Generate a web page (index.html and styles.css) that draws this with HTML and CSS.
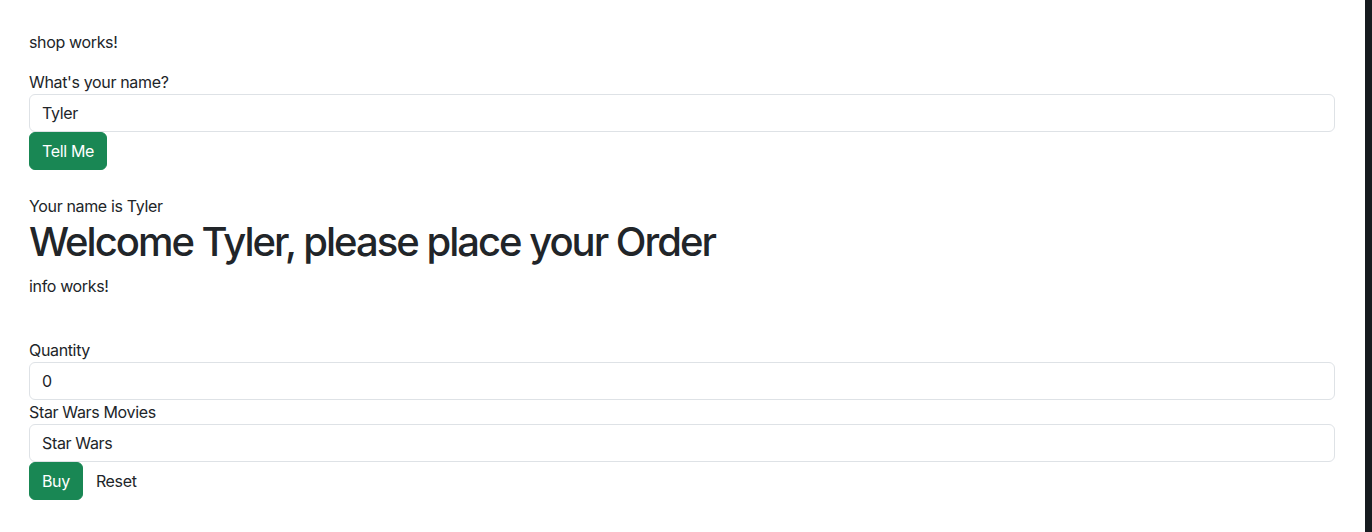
FILE: index.html
```html
<!DOCTYPE html>
<html lang="en">
<head>
<meta charset="utf-8">
<title>Shop</title>
<link rel="stylesheet" href="styles.css">
</head>
<body>
<div class="page">
  <main class="content">
    <p class="text">shop works!</p>
    <label class="label" for="name">What's your name?</label>
    <input class="field" id="name" type="text" value="Tyler">
    <div class="actions">
      <button class="btn btn-green" type="button">Tell Me</button>
    </div>
    <p class="text name-line">Your name is Tyler</p>
    <h1 class="title">Welcome Tyler, please place your Order</h1>
    <p class="text">info works!</p>
    <form class="order">
      <label class="label" for="qty">Quantity</label>
      <input class="field" id="qty" type="text" value="0">
      <label class="label" for="movie">Star Wars Movies</label>
      <input class="field" id="movie" type="text" value="Star Wars">
      <div class="actions">
        <button class="btn btn-green" type="button">Buy</button>
        <button class="btn btn-plain" type="button">Reset</button>
      </div>
    </form>
  </main>
  <div class="edge"></div>
</div>
</body>
</html>
```

FILE: styles.css
```css
* { box-sizing: border-box; }
html, body { margin: 0; padding: 0; height: 100%; }
body {
  font-family: Inter, "Liberation Sans", sans-serif;
  font-size: 16px;
  line-height: 1.5;
  letter-spacing: -0.35px;
  color: #212529;
  background: #fff;
}
.page {
  display: flex;
  height: 100%;
}
.content {
  flex: 1;
  padding: 30px 30px 0 29px;
  display: flex;
  flex-direction: column;
  align-items: stretch;
}
.edge {
  width: 7px;
  background: #161b1f;
}
.text { margin: 0 0 16px; }
.name-line { margin: 24px 0 0; }
.label { display: block; }
.field {
  display: block;
  width: 100%;
  height: 38px;
  padding: 6px 12px;
  font: inherit;
  letter-spacing: inherit;
  color: #212529;
  background: #fff;
  border: 1px solid #dee2e6;
  border-radius: 6px;
}
.actions { display: flex; }
.btn {
  font: inherit;
  letter-spacing: inherit;
  height: 38px;
  padding: 6px 12px;
  border: 1px solid transparent;
  border-radius: 6px;
  cursor: pointer;
}
.btn-green { background: #198754; color: #fff; border-color: #198754; }
.btn-plain { background: transparent; color: #212529; padding-left: 12px; }
.title {
  margin: 0 0 8px;
  font-size: 40px;
  font-weight: 500;
  line-height: 1.2;
  letter-spacing: -2px;
}
.order { margin-top: 24px; display: flex; flex-direction: column; }
```
